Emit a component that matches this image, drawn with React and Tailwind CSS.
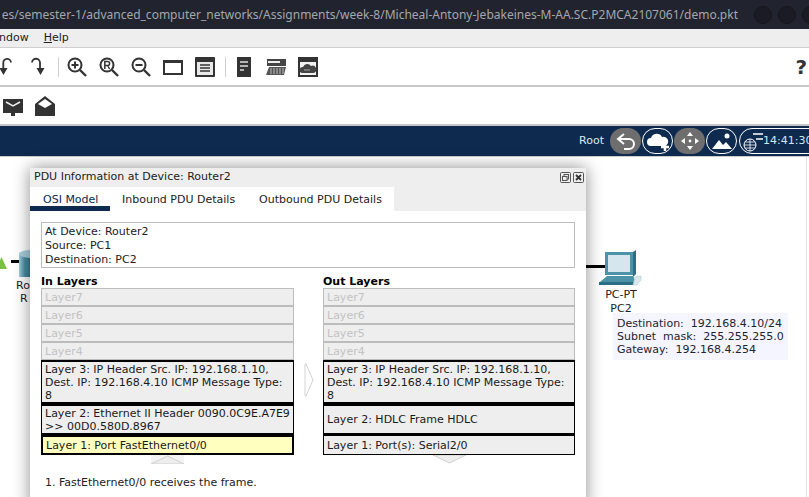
const F = { fontFamily: '"DejaVu Sans", sans-serif' };

function I({ children, w = 20, h = 20, className = "" }) {
  return (
    <svg width={w} height={h} viewBox={`0 0 ${w} ${h}`} className={`shrink-0 ${className}`}>
      {children}
    </svg>
  );
}

function Lens({ kind }) {
  return (
    <I>
      <circle cx="8" cy="8" r="6.5" fill="none" stroke="#333" strokeWidth="2" />
      <path d="M13 13 L19 19" stroke="#333" strokeWidth="2.4" />
      {kind === "plus" && <path d="M4.5 8h7M8 4.5v7" stroke="#333" strokeWidth="2" />}
      {kind === "minus" && <path d="M4.5 8h7" stroke="#333" strokeWidth="2" />}
      {kind === "r" && (
        <path d="M5.8 12V4.5h2.8a2 2 0 0 1 0 4H5.8M8.6 8.5l2 3.500" fill="none" stroke="#333" strokeWidth="1.5" />
      )}
    </I>
  );
}

function Toolbar() {
  return (
    <div className="flex h-[39px] shrink-0 items-center border-b-2 border-[#c8c8c8] bg-white">
      <div className="ml-[-7px] w-5">
        <I>
          <path d="M10.300 12V6a3.600 3.600 0 0 1 7.700 -0.500" fill="none" stroke="#333" strokeWidth="1.800" />
          <path d="M6.500 11h8l-4 7z" fill="#333" />
        </I>
      </div>
      <div className="ml-[18px] w-5">
        <I>
          <path d="M1 5.500a4 4 0 0 1 8 0.500v6" fill="none" stroke="#333" strokeWidth="1.800" />
          <path d="M5.500 11h8l-4 7z" fill="#333" />
        </I>
      </div>
      <div className="ml-[7px] h-5 w-px bg-[#cfcfcf]" />
      <div className="ml-[8px] flex gap-3">
        <Lens kind="plus" />
        <Lens kind="r" />
        <Lens kind="minus" />
        <I>
          <rect x="1" y="4" width="18" height="13" fill="none" stroke="#333" strokeWidth="2" />
          <rect x="1" y="3" width="18" height="3" fill="#333" />
        </I>
        <I>
          <rect x="0" y="0" width="20" height="20" rx="1" fill="#333" />
          <rect x="2" y="5" width="16" height="13" fill="#e8e8e8" />
          <path d="M5 8h10M5 11h10M5 14h10" stroke="#333" strokeWidth="1.500" />
        </I>
      </div>
      <div className="ml-[10px] h-5 w-px bg-[#cfcfcf]" />
      <div className="ml-[11px] w-[14px]">
        <I w={14}>
          <rect width="14" height="20" fill="#333" />
          <path d="M3 5h8M3 9h8M3 13h4" stroke="#ddd" strokeWidth="1.400" />
        </I>
      </div>
      <div className="ml-[15px]">
        <I>
          <rect x="1" y="2" width="19" height="7" fill="#444" />
          <rect x="2" y="4" width="12" height="2" fill="#eee" />
          <path d="M3 10h17l-2 8H0z" fill="#555" />
          <path d="M5 11v6M8 11v6M11 11v6M14 11v6M17 11v6" stroke="#bbb" />
        </I>
      </div>
      <div className="ml-3">
        <I>
          <rect width="20" height="20" fill="#333" />
          <rect x="2" y="5" width="16" height="13" fill="#f2f2f2" />
          <path d="M4 16a3 3 0 0 1 1-6 4.500 4.500 0 0 1 8-1 3.500 3.500 0 0 1 3 7z" fill="#444" />
          <path d="M6 13h6" stroke="#aaa" />
        </I>
      </div>
      <span className="ml-auto mr-[2px] text-[20px] font-bold leading-none text-[#333]">?</span>
    </div>
  );
}

function Layer({ children, off, className = "" }) {
  return (
    <div
      className={`flex items-center border px-[3px] text-[11px] leading-[13px] ${
        off ? "h-[18px] border-[#bcbcbc] bg-[#eeeeee] text-[#c2c2c2]" : "border-black text-[#1a1a1a]"
      } ${className}`}
    >
      {children}
    </div>
  );
}

function Column({ title, l3, l2, l1, active }) {
  return (
    <div className="flex flex-col">
      <div className="h-[13px] text-[11px] font-bold leading-[13px] text-black">{title}</div>
      <div className="flex flex-col">
        {["Layer7", "Layer6", "Layer5", "Layer4"].map((x) => (
          <Layer off key={x}>{x}</Layer>
        ))}
        <Layer className="h-[44px] border-y-2 bg-[#eeeeee]">{l3}</Layer>
        <Layer className="h-[31px] border-y-2 bg-[#eeeeee]">{l2}</Layer>
        <Layer className={active ? "h-[20px] border-2 bg-[#ffffc0]" : "h-[20px] bg-[#eeeeee]"}>{l1}</Layer>
      </div>
    </div>
  );
}

function Pill({ children, grey }) {
  return (
    <div
      className={`flex h-[26px] w-[31px] shrink-0 items-center justify-center rounded-full ${
        grey ? "bg-[#6e6e6e]" : "border border-white"
      }`}
    >
      {children}
    </div>
  );
}

export default function App() {
  return (
    <div className="flex h-[497px] w-[809px] flex-col overflow-hidden bg-white" style={F}>
      <div className="flex h-[29px] shrink-0 items-center bg-[#21232e]">
        <div className="min-w-0 flex-1 overflow-hidden">
          <div
            className="float-right whitespace-nowrap text-[12px] text-[#a4a7ad]"
            style={{ fontFamily: '"Noto Sans", sans-serif' }}
          >
            es/semester-1/advanced_computer_networks/Assignments/week-8/Micheal-Antony-Jebakeines-M-AA.SC.P2MCA2107061/demo.pkt
          </div>
        </div>
        <div className="ml-[16px] mr-[-11px] flex shrink-0 gap-[6px]">
          <span className="h-[18px] w-[18px] rounded-full border border-[#15161d] bg-[#1a1b24]" />
          <span className="h-[18px] w-[18px] rounded-full border border-[#15161d] bg-[#1a1b24]" />
          <span className="h-[18px] w-[18px] rounded-full border border-[#15161d] bg-[#1a1b24]" />
        </div>
      </div>

      <div className="flex h-[19px] shrink-0 items-center border-b border-[#cfcfcf] bg-[#eeeeee] pt-[1px] text-[11px] text-[#222]">
        <span className="ml-[-1px]">ndow</span>
        <span className="ml-[15px]"><span className="underline">H</span>elp</span>
      </div>

      <Toolbar />

      <div className="flex h-[39px] shrink-0 items-center gap-3 border-b-2 border-[#c8c8c8] bg-white pl-[3px]">
        <I>
          <rect x="0" y="3" width="20" height="14" fill="#333" />
          <path d="M8 17h4v3H8z" fill="#333" />
          <path d="M3 6l7 4 7-4" fill="none" stroke="#eee" strokeWidth="1.500" />
        </I>
        <I>
          <path d="M0 8L10 0l10 8v12H0z" fill="#333" />
          <path d="M3 8l7-5 7 5-7 4z" fill="#fff" />
        </I>
      </div>

      <div className="flex h-[31px] shrink-0 items-center justify-end border-b border-[#ccc] bg-[#0e2a4f]">
        <span className="mr-[6px] text-[11px] text-[#dfe6ee]">Root</span>
        <div className="mr-[-40px] flex w-[239px] shrink-0 items-center gap-[1px]">
          <Pill grey>
            <I w={22} h={20}>
              <path d="M4 8h10a5 5 0 0 1 0 10H9" fill="none" stroke="#fff" strokeWidth="2" />
              <path d="M9 3L3 8l6 5" fill="none" stroke="#fff" strokeWidth="2" />
            </I>
          </Pill>
          <Pill>
            <I w={24} h={22}>
              <path d="M5 16a4 4 0 0 1 0-8 6 6 0 0 1 11-1 4.500 4.500 0 0 1 3 9z" fill="#fff" />
              <path d="M19 13v8M15 17h8" stroke="#fff" strokeWidth="2.500" />
            </I>
          </Pill>
          <Pill grey>
            <I w={22} h={22}>
              <path d="M11 2l3 4H8zM11 20l3-4H8zM2 11l4-3v6zM20 11l-4-3v6z" fill="#fff" />
              <circle cx="11" cy="11" r="1.400" fill="#fff" />
            </I>
          </Pill>
          <Pill>
            <I w={22} h={20}>
              <circle cx="16" cy="5" r="2.500" fill="#fff" />
              <path d="M1 18l7-9 4 5 3-3 6 7z" fill="#fff" />
            </I>
          </Pill>
          <div className="ml-[1px] flex h-[26px] w-[100px] shrink-0 items-center rounded-l-full border border-white pl-[2px]">
            <I w={21} h={24}>
              <circle cx="8" cy="16" r="6" fill="none" stroke="#fff" />
              <path d="M2 16h12M8 10v12M3 13h10M3 19h10" stroke="#fff" strokeWidth="0.800" />
              <path d="M11 5h10M14 10h7" stroke="#fff" strokeWidth="1.500" />
            </I>
            <span className="text-[11px] text-[#cfe8ee]">14:41:30</span>
          </div>
        </div>
      </div>

      <main className="relative min-h-0 flex-1 bg-white">
        <div className="absolute bottom-0 right-[2px] top-0 w-px bg-[#e0e0e0]" />

        {/* network canvas */}
        <div className="absolute left-[11px] top-[103px] h-[3px] w-[8px] bg-black" />
        <svg width="8" height="12" className="absolute left-0 top-[100px]">
          <path d="M-4 12L1.500 0 7 12z" fill="#7ac143" />
        </svg>
        <svg width="11" height="28" className="absolute left-[19px] top-[92px]">
          <defs>
            <linearGradient id="drum" x1="0" x2="1" y1="0" y2="0">
              <stop offset="0" stopColor="#9fcfdd" />
              <stop offset="0.500" stopColor="#4d8ea3" />
              <stop offset="1" stopColor="#3c7d93" />
            </linearGradient>
          </defs>
          <rect x="0" y="4" width="11" height="24" fill="url(#drum)" />
          <ellipse cx="12" cy="5" rx="12" ry="4" fill="#a9cfdb" />
        </svg>
        <div className="absolute left-[16px] top-[122px] text-[11px] leading-[13px] text-[#222]">Ro<br /><span className="ml-[4px]">R</span></div>

        <div className="absolute left-[586px] top-[108px] h-[3px] w-[20px] bg-black" />
        <svg width="44" height="38" viewBox="0 0 44 38" className="absolute left-[599px] top-[93px]">
          <path d="M6 2h28v23H6z" fill="#4d93a8" />
          <path d="M34 2l3-2v24l-3 3z" fill="#2c6f85" />
          <rect x="9" y="5" width="22" height="17" fill="#d6e6ee" />
          <path d="M8 26h26l3 6H1z" fill="#4d93a8" />
          <path d="M0 32h36v3H0z" fill="#2c6f85" />
          <path d="M36 27l6 -1v4l-4 5h-4z" fill="#dce7ec" stroke="#9cc" strokeWidth="0.500" />
        </svg>
        <div className="absolute left-[598px] top-[131px] w-[46px] text-center text-[11px] leading-[14px] text-[#222]">
          PC-PT<br />PC2
        </div>
        <div className="absolute left-[613px] top-[156px] h-[47px] w-[175px] bg-[#f4f5fe] px-[4px] pt-[4px] text-[11px] leading-[13px] text-[#1e2430]">
          <div className="whitespace-pre">Destination:  192.168.4.10/24</div>
          <div className="whitespace-pre">Subnet  mask:  255.255.255.0</div>
          <div className="whitespace-pre">Gateway:  192.168.4.254</div>
        </div>

        {/* PDU dialog */}
        <section className="absolute left-[30px] top-[11px] h-[340px] w-[556px] bg-white shadow-[0_0_16px_rgba(0,0,0,0.45)]">
          <header className="flex h-[19px] items-center justify-between bg-[#eeeeee] pl-[4px] pr-[2px] text-[11px] text-[#222]">
            <span>PDU Information at Device: Router2</span>
            <div className="flex gap-[2px]">
              <svg width="11" height="11" viewBox="0 0 11 11">
                <rect x="0.500" y="0.500" width="10" height="10" rx="1" fill="none" stroke="#555" />
                <rect x="4" y="2.500" width="4.500" height="4.500" fill="none" stroke="#555" />
                <rect x="2.500" y="4.500" width="4.500" height="4" fill="#eee" stroke="#555" />
              </svg>
              <svg width="11" height="11" viewBox="0 0 11 11">
                <rect x="0.500" y="0.500" width="10" height="10" rx="1" fill="none" stroke="#555" />
                <path d="M3 3l5 5M8 3l-5 5" stroke="#333" strokeWidth="1.800" />
              </svg>
            </div>
          </header>
          <nav className="flex h-[24px] bg-[#eeeeee] text-[11px] text-[#222]">
            <div className="w-[80px] border-b-[5px] border-[#0e2a4f] bg-white pl-[13px] pt-[6px] leading-[13px] text-[#0e2a4f]">OSI Model</div>
            <div className="w-[137px] bg-white pl-[12px] pt-[6px] leading-[13px]">Inbound PDU Details</div>
            <div className="w-[147px] bg-white pl-[12px] pt-[6px] leading-[13px]">Outbound PDU Details</div>
          </nav>
          <div className="px-[11px] pt-[11px]">
            <div className="h-[46px] border border-[#bcbcbc] px-[3px] py-[2px] text-[11px] leading-[14px] text-[#222]">
              At Device: Router2<br />Source: PC1<br />Destination: PC2
            </div>
            <div className="mt-[7px] grid grid-cols-[253px_252px] gap-x-[29px]">
              <Column
                title="In Layers"
                active
                l3="Layer 3: IP Header Src. IP: 192.168.1.10, Dest. IP: 192.168.4.10 ICMP Message Type: 8"
                l2="Layer 2: Ethernet II Header 0090.0C9E.A7E9 >> 00D0.580D.8967"
                l1="Layer 1: Port FastEthernet0/0"
              />
              <Column
                title="Out Layers"
                l3="Layer 3: IP Header Src. IP: 192.168.1.10, Dest. IP: 192.168.4.10 ICMP Message Type: 8"
                l2="Layer 2: HDLC Frame HDLC"
                l1="Layer 1: Port(s): Serial2/0"
              />
            </div>
            <div className="grid h-[10px] grid-cols-[253px_252px] gap-x-[29px]">
              <svg width="33" height="9" className="ml-[110px] bg-[#f4f4f4]">
                <path d="M0 9L16.500 1 33 9z" fill="#eeeeee" stroke="#d0d0d0" />
              </svg>
              <svg width="33" height="9" className="ml-[110px] bg-white">
                <path d="M0 0L16.500 8 33 0z" fill="#eeeeee" stroke="#d0d0d0" />
              </svg>
            </div>
            <p className="mt-[11px] px-[4px] text-[11px] leading-[13px] text-[#222]">1. FastEthernet0/0 receives the frame.</p>
          </div>
          <svg width="10" height="34" className="absolute left-[274px] top-[195px]">
            <path d="M1 1h1l7 16-7 16H1z" fill="#fff" stroke="#d2d2d2" />
          </svg>
        </section>
      </main>
    </div>
  );
}
